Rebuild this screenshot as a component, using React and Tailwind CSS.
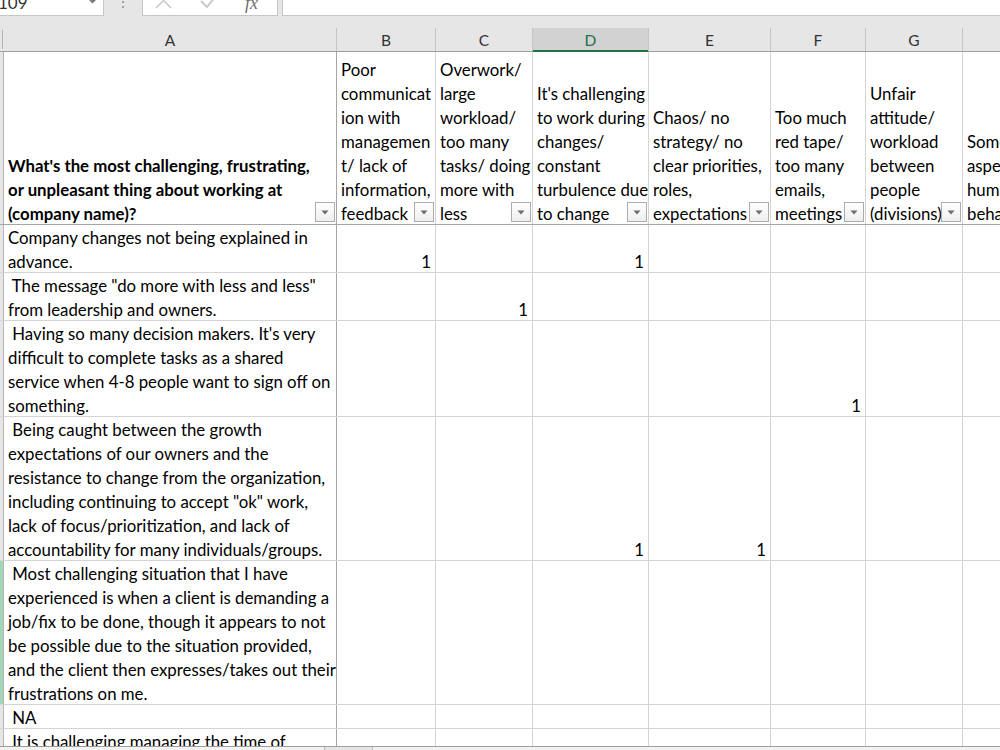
import React from "react";

// sheet columns: letter, width (incl. right gridline)
const columns = [
  { key: "A", w: "w-[333px]", edge: "border-r-[#a6a6a6]" },
  { key: "B", w: "w-[99px]" },
  { key: "C", w: "w-[97px]" },
  { key: "D", w: "w-[116px]", active: true },
  { key: "E", w: "w-[122px]" },
  { key: "F", w: "w-[95px]" },
  { key: "G", w: "w-[97px]" },
  { key: "H", w: "w-[110px]" },
];

const headers = [
  ["What's the most challenging, frustrating,", "or unpleasant thing about working at", "(company name)?"],
  ["Poor", "communicat", "ion with", "managemen", "t/ lack of", "information,", "feedback"],
  ["Overwork/", "large", "workload/", "too many", "tasks/ doing", "more with", "less"],
  ["It's challenging", "to work during", "changes/", "constant", "turbulence due", "to change"],
  ["Chaos/ no", "strategy/ no", "clear priorities,", "roles,", "expectations"],
  ["Too much", "red tape/", "too many", "emails,", "meetings"],
  ["Unfair", "attitude/", "workload", "between", "people", "(divisions)"],
  ["Some", "aspects of", "human", "behavior"],
];

const rows = [
  {
    h: "h-[48px]",
    text: ["Company changes not being explained in", "advance."],
    marks: { B: 1, D: 1 },
  },
  {
    h: "h-[48px]",
    text: [' The message "do more with less and less"', "from leadership and owners."],
    marks: { C: 1 },
  },
  {
    h: "h-[96px]",
    text: [
      " Having so many decision makers. It's very",
      "difficult to complete tasks as a shared",
      "service when 4-8 people want to sign off on",
      "something.",
    ],
    marks: { F: 1 },
  },
  {
    h: "h-[144px]",
    text: [
      " Being caught between the growth",
      "expectations of our owners and the",
      "resistance to change from the organization,",
      'including continuing to accept "ok" work,',
      "lack of focus/prioritization, and lack of",
      "accountability for many individuals/groups.",
    ],
    marks: { D: 1, E: 1 },
  },
  {
    h: "h-[144px]",
    selected: true,
    text: [
      " Most challenging situation that I have",
      "experienced is when a client is demanding a",
      "job/fix to be done, though it appears to not",
      "be possible due to the situation provided,",
      "and the client then expresses/takes out their",
      "frustrations on me.",
    ],
    marks: {},
  },
  { h: "h-[24px]", text: [" NA"], marks: {} },
  { h: "h-[48px]", text: [" It is challenging managing the time of", "others"], marks: {} },
];

function FilterButton() {
  return (
    <div className="absolute right-[1px] bottom-[2px] flex h-[20px] w-[20px] items-center justify-center border border-[#acacac] bg-gradient-to-b from-white to-[#eeeeee]">
      <svg width="8" height="5" viewBox="0 0 8 5">
        <path d="M0.5 0.5h7L4 4.5z" fill="#6b6b6b" />
      </svg>
    </div>
  );
}

function FormulaBar() {
  return (
    <div className="flex h-[16px] shrink-0 overflow-hidden">
      <div className="relative flex w-[104px] border-r border-b border-[#c6c6c6] bg-white">
        <span className="-mt-[7px] -ml-[2px] text-[17px] leading-[20px] text-[#333]">109</span>
        <svg className="absolute left-[89px] top-[0px]" width="7" height="4" viewBox="0 0 7 4">
          <path d="M0 0h7L3.5 3.5z" fill="#7a7a7a" />
        </svg>
      </div>
      <div className="flex w-[38px] flex-col items-center gap-[3px] pt-[1px]">
        <span className="h-[2px] w-[2px] bg-[#a0a0a0]" />
        <span className="h-[2px] w-[2px] bg-[#a0a0a0]" />
      </div>
      <div className="flex w-[136px] items-start border-x border-b border-[#c6c6c6] bg-white pl-[12px]">
        <svg className="-mt-[8px]" width="17" height="17" viewBox="0 0 17 17">
          <path d="M1 1L16 16M16 1L1 16" stroke="#c9c9c9" strokeWidth="1.6" fill="none" />
        </svg>
        <svg className="ml-[28px] -mt-[5px]" width="16" height="13" viewBox="0 0 16 13">
          <path d="M1 6L7 12L15 2" stroke="#c9c9c9" strokeWidth="2" fill="none" />
        </svg>
        <span className="ml-[29px] -mt-[6px] font-['Liberation_Serif',serif] text-[18px] italic leading-[18px] text-[#6e6e6e]">
          fx
        </span>
      </div>
      <div className="ml-[4px] flex-1 border-b border-l border-[#c6c6c6] bg-white" />
    </div>
  );
}

function ColumnHeaders() {
  return (
    <div className="flex h-[24px] shrink-0 border-b border-[#9e9e9e] text-[15.5px]">
      <div className="w-[4px] shrink-0 py-[2px]">
        <div className="ml-[2px] h-full w-[1px] bg-[#b5b5b5]" />
      </div>
      {columns.map((c) => (
        <div
          key={c.key}
          className={`${c.w} flex shrink-0 items-center justify-center border-r border-[#c4c4c4] ${
            c.active ? "relative bg-[#d2d2d2] text-[#217346]" : "text-[#333]"
          }`}
        >
          {c.key}
          {c.active && <div className="absolute bottom-[-1px] left-0 right-0 h-[2px] bg-[#217346]" />}
        </div>
      ))}
    </div>
  );
}

function TitleRow() {
  return (
    <div className="flex h-[173px] shrink-0 border-b border-[#a6a6a6]">
      <div className="w-[4px] shrink-0 border-r border-[#b5b5b5] bg-[#e6e6e6]" />
      {columns.map((c, i) => (
        <div
          key={c.key}
          className={`${c.w} relative flex shrink-0 flex-col justify-end overflow-hidden border-r border-[#d4d4d4] ${
            c.edge || ""
          } pl-[4px] ${i === 0 ? "font-bold" : ""}`}
        >
          <div className="translate-y-[2px]">
            {headers[i].map((line, j) => (
              <div key={j} className="whitespace-pre">
                {line}
              </div>
            ))}
          </div>
          {c.key !== "H" && <FilterButton />}
        </div>
      ))}
    </div>
  );
}

function DataRow({ row }) {
  return (
    <div className={`flex ${row.h} shrink-0 border-b border-[#d4d4d4]`}>
      <div
        className={`w-[4px] shrink-0 border-r border-[#b5b5b5] ${row.selected ? "bg-[#a3d6b8]" : "bg-[#e6e6e6]"}`}
      />
      {columns.map((c, i) => (
        <div
          key={c.key}
          className={`${c.w} flex shrink-0 flex-col justify-end overflow-hidden border-r border-[#d4d4d4] ${
            c.edge || ""
          } ${i === 0 ? "pl-[4px]" : "items-end pr-[4px]"}`}
        >
          <div className="translate-y-[2px]">
            {i === 0
              ? row.text.map((line, j) => (
                  <div key={j} className="whitespace-pre">
                    {line}
                  </div>
                ))
              : row.marks[c.key] && <div>{row.marks[c.key]}</div>}
          </div>
        </div>
      ))}
    </div>
  );
}

export default function App() {
  return (
    <div className="flex h-[750px] w-[1000px] flex-col overflow-hidden bg-[#e6e6e6] font-['Lato',sans-serif] text-[16.8px] leading-[24px] text-black">
      <FormulaBar />
      <div className="h-[12px] shrink-0" />
      <ColumnHeaders />
      <div className="flex h-[694px] shrink-0 flex-col overflow-hidden bg-white">
        <TitleRow />
        {rows.map((r, i) => (
          <DataRow key={i} row={r} />
        ))}
      </div>
      <div className="flex h-[4px] shrink-0 border-t border-[#9e9e9e]">
        <div className="w-[325px] border-r border-[#b5b5b5] bg-[#f3f3f3]" />
        <div className="w-[47px]" />
        <div className="flex-1 border-l border-[#b5b5b5] bg-[#f3f3f3]" />
      </div>
    </div>
  );
}
